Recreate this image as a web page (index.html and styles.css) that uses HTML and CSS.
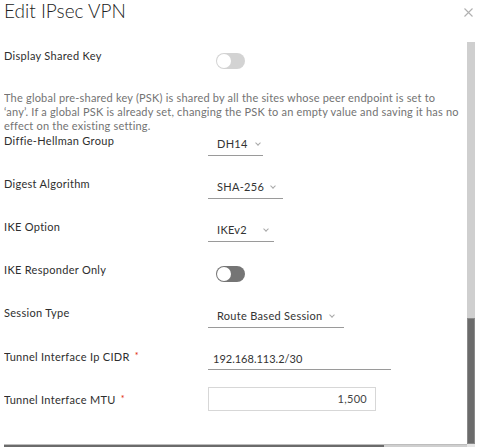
FILE: index.html
```html
<!DOCTYPE html>
<html>
<head>
<meta charset="utf-8">
<link rel="stylesheet" href="styles.css">
</head>
<body>
<div class="modal">
  <div class="header">
    <h1 class="title">Edit IPsec VPN</h1>
    <span class="close">
      <svg width="9" height="9" viewBox="0 0 9 9"><path d="M0.5 0.5 L8.5 8.5 M8.5 0.5 L0.5 8.5" stroke="#b0b0b0" stroke-width="1.1" fill="none"/></svg>
    </span>
  </div>
  <div class="scroller">
    <div class="content">
      <div class="row">
        <div class="label">Display Shared Key</div>
        <div class="toggle toggle-light"><span class="knob"></span></div>
      </div>
      <p class="desc">The global pre-shared key (PSK) is shared by all the sites whose peer endpoint is set to<br>‘any’. If a global PSK is already set, changing the PSK to an empty value and saving it has no<br>effect on the existing setting.</p>
      <div class="row">
        <div class="label">Diffie-Hellman Group</div>
        <div class="select sel-dh"><span>DH14</span><i class="chev"></i></div>
      </div>
      <div class="row">
        <div class="label">Digest Algorithm</div>
        <div class="select sel-sha"><span>SHA-256</span><i class="chev"></i></div>
      </div>
      <div class="row">
        <div class="label">IKE Option</div>
        <div class="select sel-ike"><span>IKEv2</span><i class="chev"></i></div>
      </div>
      <div class="row">
        <div class="label">IKE Responder Only</div>
        <div class="toggle toggle-dark"><span class="knob"></span></div>
      </div>
      <div class="row">
        <div class="label">Session Type</div>
        <div class="select sel-session"><span>Route Based Session</span><i class="chev"></i></div>
      </div>
      <div class="row">
        <div class="label">Tunnel Interface Ip CIDR<span class="req">*</span></div>
        <div class="input-line">192.168.113.2/30</div>
      </div>
      <div class="row">
        <div class="label">Tunnel Interface MTU<span class="req">*</span></div>
        <div class="input-box">1,500</div>
      </div>
    </div>
    <div class="vbar"><div class="vspace"></div><div class="vthumb"></div></div>
    <div class="hbar"><div class="hthumb"></div></div>
    <div class="corner"></div>
  </div>
</div>
</body>
</html>
```
FILE: styles.css
```css
* { box-sizing: border-box; }
html, body { margin: 0; padding: 0; background: #fff; }
body {
  font-family: Lato, "Open Sans", sans-serif;
  font-size: 11px;
  letter-spacing: 0.3px;
  color: #333;
  width: 485px;
  height: 447px;
  overflow: hidden;
}
.header {
  display: flex;
  justify-content: space-between;
  align-items: flex-start;
  height: 42px;
  padding: 0 12px 0 4px;
}
.title {
  margin: 0;
  font-size: 19px;
  font-weight: 300;
  letter-spacing: 0;
  line-height: 22px;
  color: #222;
}
.close { display: flex; padding-top: 8px; }
.scroller {
  display: grid;
  grid-template-columns: 463px 8px;
  grid-template-rows: 402px 8px;
  margin-left: 4px;
  width: 471px;
}
.content {
  overflow: hidden;
  padding-top: 6px;
}
.row {
  display: grid;
  grid-template-columns: 204px 1fr;
  align-items: start;
  height: 43px;
}
.label {
  line-height: 16px;
  color: #2e2e2e;
}
.req {
  color: #e02200;
  font-size: 9px;
  margin-left: 5px;
  vertical-align: 2px;
}
.desc {
  margin: 0;
  height: 42px;
  line-height: 14px;
  color: #737373;
  white-space: nowrap;
  letter-spacing: 0.2px;
}
.toggle {
  width: 29px;
  height: 16px;
  border-radius: 8px;
  margin-top: 5px;
  margin-left: 8px;
  display: flex;
  align-items: center;
  padding-left: 1px;
}
.toggle-light { background: #d3d3d3; }
.toggle-dark { background: #757575; margin-top: 4px; }
.knob {
  width: 14px;
  height: 14px;
  border-radius: 50%;
  background: #fff;
}
.select {
  height: 23px;
  border-bottom: 1px solid #9a9a9a;
  display: flex;
  align-items: center;
  padding-left: 9px;
  line-height: 22px;
  color: #333;
}
.chev {
  width: 4px;
  height: 4px;
  border-right: 1px solid #a8a8a8;
  border-bottom: 1px solid #a8a8a8;
  transform: rotate(45deg);
  margin-top: -3px;
}
.sel-dh { width: 55px; }
.sel-dh .chev { margin-left: 8px; }
.sel-sha { width: 75px; }
.sel-sha .chev { margin-left: 7px; }
.sel-ike { width: 66px; }
.sel-ike .chev { margin-left: 17px; }
.sel-session { width: 136px; }
.sel-session .chev { margin-left: 8px; }
.input-line {
  width: 183px;
  height: 22px;
  border-bottom: 1px solid #9a9a9a;
  padding-left: 5px;
  line-height: 21px;
  color: #333;
  letter-spacing: 0;
}
.input-box {
  width: 168px;
  height: 24px;
  margin-top: -4px;
  border: 1px solid #d7d7d7;
  text-align: right;
  padding-right: 8px;
  line-height: 22px;
  color: #444;
}
.vbar {
  background: #cfcfcf;
  display: flex;
  flex-direction: column;
}
.vspace { height: 276px; }
.vthumb { flex: 1; background: #6b6b6b; border: 1px solid #8a8a8a; }
.hbar {
  background: #cfcfcf;
  border-top: 1px solid #bdbdbd;
  display: flex;
}
.hthumb { width: 380px; background: #6b6b6b; }
.corner { background: #e6e6e6; }
```
